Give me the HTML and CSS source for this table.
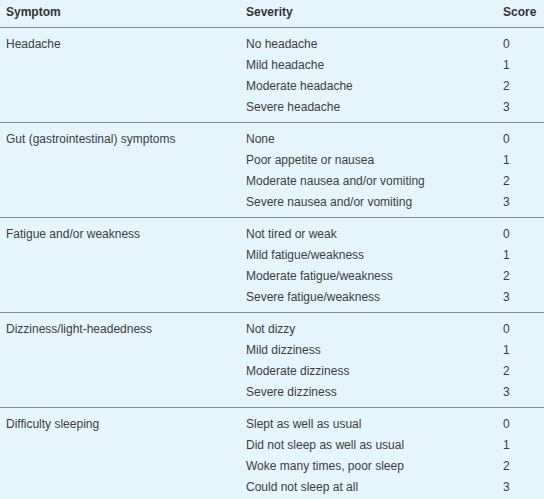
FILE: index.html
```html
<!DOCTYPE html>
<html>
<head>
<meta charset="utf-8">
<link rel="stylesheet" href="styles.css">
</head>
<body>
<div class="table">
  <div class="head">
    <div>Symptom</div><div>Severity</div><div>Score</div>
  </div>
  <div class="group">
    <div class="sym">Headache</div>
    <div class="sev"><div>No headache</div><div>Mild headache</div><div>Moderate headache</div><div>Severe headache</div></div>
    <div class="score"><div>0</div><div>1</div><div>2</div><div>3</div></div>
  </div>
  <div class="group">
    <div class="sym">Gut (gastrointestinal) symptoms</div>
    <div class="sev"><div>None</div><div>Poor appetite or nausea</div><div>Moderate nausea and/or vomiting</div><div>Severe nausea and/or vomiting</div></div>
    <div class="score"><div>0</div><div>1</div><div>2</div><div>3</div></div>
  </div>
  <div class="group">
    <div class="sym">Fatigue and/or weakness</div>
    <div class="sev"><div>Not tired or weak</div><div>Mild fatigue/weakness</div><div>Moderate fatigue/weakness</div><div>Severe fatigue/weakness</div></div>
    <div class="score"><div>0</div><div>1</div><div>2</div><div>3</div></div>
  </div>
  <div class="group">
    <div class="sym">Dizziness/light-headedness</div>
    <div class="sev"><div>Not dizzy</div><div>Mild dizziness</div><div>Moderate dizziness</div><div>Severe dizziness</div></div>
    <div class="score"><div>0</div><div>1</div><div>2</div><div>3</div></div>
  </div>
  <div class="group">
    <div class="sym">Difficulty sleeping</div>
    <div class="sev"><div>Slept as well as usual</div><div>Did not sleep as well as usual</div><div>Woke many times, poor sleep</div><div>Could not sleep at all</div></div>
    <div class="score"><div>0</div><div>1</div><div>2</div><div>3</div></div>
  </div>
</div>
</body>
</html>
```

FILE: styles.css
```css
html, body {
  margin: 0;
  background: #e5f5fc;
}
body {
  font-family: "Liberation Sans", Arial, sans-serif;
  font-size: 12px;
  line-height: 21px;
  color: #3c3c3c;
}
.table {
  width: 544px;
}
.head, .group {
  display: grid;
  grid-template-columns: 240px 257px 1fr;
  padding-left: 6px;
}
.head {
  font-weight: bold;
  color: #333;
  padding-top: 2px;
  padding-bottom: 4px;
}
.group {
  border-top: 1px solid #858b8e;
  padding-top: 6px;
  padding-bottom: 4px;
}
```
